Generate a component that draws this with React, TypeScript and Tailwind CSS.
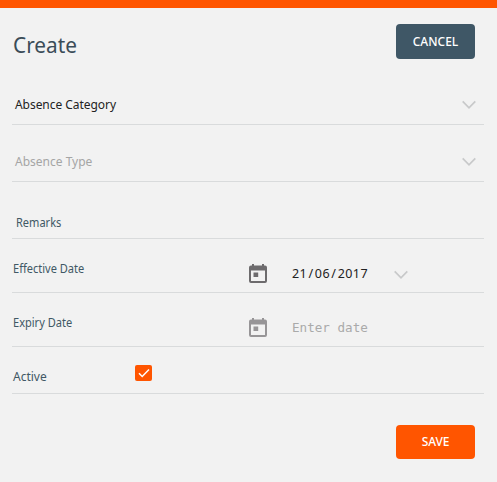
import type { ReactNode } from "react";

function Row({ className, children }: { className: string; children: ReactNode }) {
  return <div className={`flex border-b border-[#d9dbdc] leading-4 ${className}`}>{children}</div>;
}

function Chevron({ className = "" }: { className?: string }) {
  return (
    <svg className={`h-[10px] w-[16px] shrink-0 ${className}`} viewBox="0 0 16 10" fill="none" stroke="#c8c9ca" strokeWidth="1.7">
      <path d="M1.7 1.3 8 7.8l6.3-6.5" />
    </svg>
  );
}

function Calendar({ color }: { color: string }) {
  return (
    <svg className="h-[19px] w-[18px] shrink-0" viewBox="0 0 18 19" fill={color}>
      <path fillRule="evenodd" d="M3 0h2v1.500h8V0h2v1.500h1a2 2 0 0 1 2 2V17a2 2 0 0 1-2 2H2a2 2 0 0 1-2-2V3.500a2 2 0 0 1 2-2h1V0ZM2 6.500V17h14V6.500H2Z" />
      <path d="M4.500 8.500h4.700v4.500H4.500z" />
    </svg>
  );
}

export default function App() {
  return (
    <div className="h-[482px] w-[497px] overflow-hidden border-t-8 border-[#ff5500] bg-[#f2f2f2] font-['Noto_Sans',sans-serif] text-[12px] text-[#415865]">
      <header className="flex h-[60px] items-start justify-between pt-4 pr-[22px] pl-[13px]">
        <h1 className="mt-[5px] origin-left scale-x-[0.945] text-[22px] leading-[30px] text-[#3b4c58]">Create</h1>
        <button className="h-[35px] w-[79px] rounded-[4px] bg-[#3f5766] text-[12px] font-medium text-white">CANCEL</button>
      </header>
      <main className="ml-3 w-[472px]">
        <Row className="h-[57px] justify-between pt-[29px] pr-[7px] pl-[3px] text-[#222]">
          <span className="tracking-[-0.05px]">Absence Category</span>
          <Chevron className="mt-[2.5px]" />
        </Row>
        <Row className="h-[57px] justify-between pt-[29px] pr-[7px] pl-[3px] text-[#a5a5a5]">
          <span>Absence Type</span>
          <Chevron className="mt-[2.5px]" />
        </Row>
        <Row className="h-[57px] pt-[33px] pl-[4px]">
          <span className="origin-left scale-x-[0.92]">Remarks</span>
        </Row>
        <Row className="h-[54px] pt-[22px] pl-[1px]">
          <span className="w-[236px] origin-left scale-x-[0.92]">Effective Date</span>
          <div className="mt-[3px] flex">
            <Calendar color="#6d6b6d" />
            <span className="mt-[2px] ml-[25px] w-[101px] text-[12.5px] tracking-[0.45px] text-[#222]">
              21<span className="px-[1.25px]">/</span>06<span className="px-[1.25px]">/</span>2017
            </span>
            <Chevron className="mt-[6px]" />
          </div>
        </Row>
        <Row className="h-[54px] pt-[22px] pl-[1px]">
          <span className="w-[236px] origin-left scale-x-[0.92]">Expiry Date</span>
          <div className="mt-[3px] flex">
            <Calendar color="#979597" />
            <span className="mt-[2px] ml-[25px] font-['DejaVu_Sans_Mono',monospace] text-[12.6px] text-[#aaa]">Enter date</span>
          </div>
        </Row>
        <Row className="h-[47px] pt-[22px] pl-[1px]">
          <span className="w-[122px]">Active</span>
          <span className="-mt-[4px] flex h-[16px] w-[17px] items-center justify-center rounded-[2px] bg-[#ff5500]">
            <svg className="h-[10px] w-[12px]" viewBox="0 0 12 10" fill="none" stroke="white" strokeWidth="1.5">
              <path d="m1 5.300 3.200 3.200L11 1.500" />
            </svg>
          </span>
        </Row>
      </main>
      <footer className="flex justify-end pt-[31px] pr-[22px]">
        <button className="h-[34px] w-[79px] rounded-[4px] bg-[#ff5500] text-[12px] font-medium tracking-[-0.15px] text-white">SAVE</button>
      </footer>
    </div>
  );
}
